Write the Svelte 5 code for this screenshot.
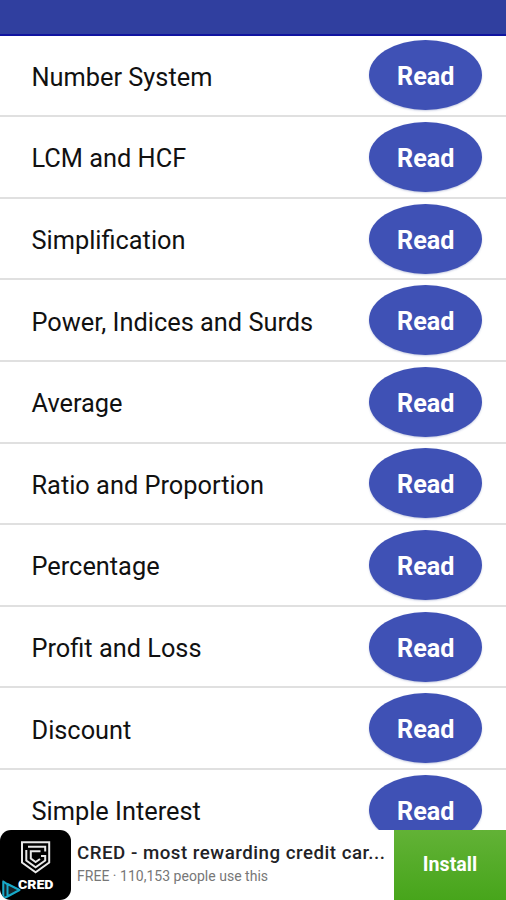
<script>
  const topics = [
    'Number System', 'LCM and HCF', 'Simplification', 'Power, Indices and Surds', 'Average',
    'Ratio and Proportion', 'Percentage', 'Profit and Loss', 'Discount', 'Simple Interest',
  ];
</script>

<div class="screen">
  <header></header>
  <main>
    {#each topics as topic}
      <div class="row">
        <span class="topic">{topic}</span>
        <button>Read</button>
      </div>
    {/each}
  </main>
  <footer>
    <div class="logo">
      <svg width="71" height="70" viewBox="0 0 71 70">
        <g fill="none" stroke="#e8e8e8">
          <path d="M22 12.3H49.2V32.5L35.6 42.2L22 32.5Z" stroke-width="2" />
          <path d="M28 16.8H45.2V21.5M26.3 20V30.5L35.6 37.3L45.2 30.5V26H41" stroke-width="2" />
          <path d="M40.5 21.3H30.8V28.5L35.6 32L40 29" stroke-width="2" />
        </g>
        <text x="18" y="58.8" textLength="35.5" lengthAdjust="spacingAndGlyphs">CRED</text>
        <path d="M2 49.5V69.5L21 60Z" fill="#172329" />
        <path d="M7.5 54.5L3.3 51.5V68.5L7.5 66.5M7.5 54V66.5L19.5 60Z" fill="none" stroke="#16a9c9" stroke-width="2" stroke-linejoin="round" />
      </svg>
    </div>
    <div class="info">
      <div class="title">CRED - most rewarding credit car...</div>
      <div class="sub">FREE · 110,153 people use this</div>
    </div>
    <div class="install">Install</div>
  </footer>
</div>

<style>
  :global(body) { margin: 0; }
  .screen {
    width: 506px;
    height: 900px;
    overflow: hidden;
    display: flex;
    flex-direction: column;
    background: #fff;
    font-family: Roboto, sans-serif;
  }
  header {
    box-sizing: border-box;
    flex: none;
    height: 35.6px;
    background: #303f9f;
    border-bottom: 2px solid #1014a0;
  }
  main { flex: 1; min-height: 0; overflow: hidden; }
  .row {
    box-sizing: border-box;
    height: 81.6px;
    padding: 0 24.5px 0 31.5px;
    display: flex;
    align-items: center;
    justify-content: space-between;
    border-bottom: 2px solid #e0e0e0;
  }
  .topic {
    font-size: 25.35px;
    color: #111;
    line-height: 30px;
    white-space: nowrap;
    margin-top: 3px;
  }
  button {
    width: 112.5px;
    height: 70px;
    padding: 4px 0 0 1px;
    margin: 0;
    border: 0;
    border-radius: 50%;
    background: #3f51b5;
    box-shadow: 0 1px 2px #5a69a755;
    color: #fff;
    font: bold 25.2px/30px Roboto, sans-serif;
  }
  footer { flex: none; height: 70px; display: flex; background: #fff; }
  .logo {
    width: 71px;
    height: 70px;
    border-radius: 11px;
    overflow: hidden;
    background: #000;
  }
  .logo svg { display: block; }
  .logo text { font: 900 12px Roboto, sans-serif; fill: #fff; }
  .info { flex: 1; min-width: 0; padding: 12px 0 0 6px; white-space: nowrap; }
  .title { font-size: 18.7px; font-weight: 500; line-height: 23px; letter-spacing: 0.51px; color: #222226; }
  .sub { margin-top: 2px; font-size: 14px; line-height: 18px; letter-spacing: 0.02px; color: #777; }
  .install {
    box-sizing: border-box;
    width: 112px;
    padding-bottom: 2px;
    display: flex;
    align-items: center;
    justify-content: center;
    background: linear-gradient(#62b236, #47a51b);
    color: #fff;
    font-size: 19.6px;
    font-weight: 700;
  }
</style>
